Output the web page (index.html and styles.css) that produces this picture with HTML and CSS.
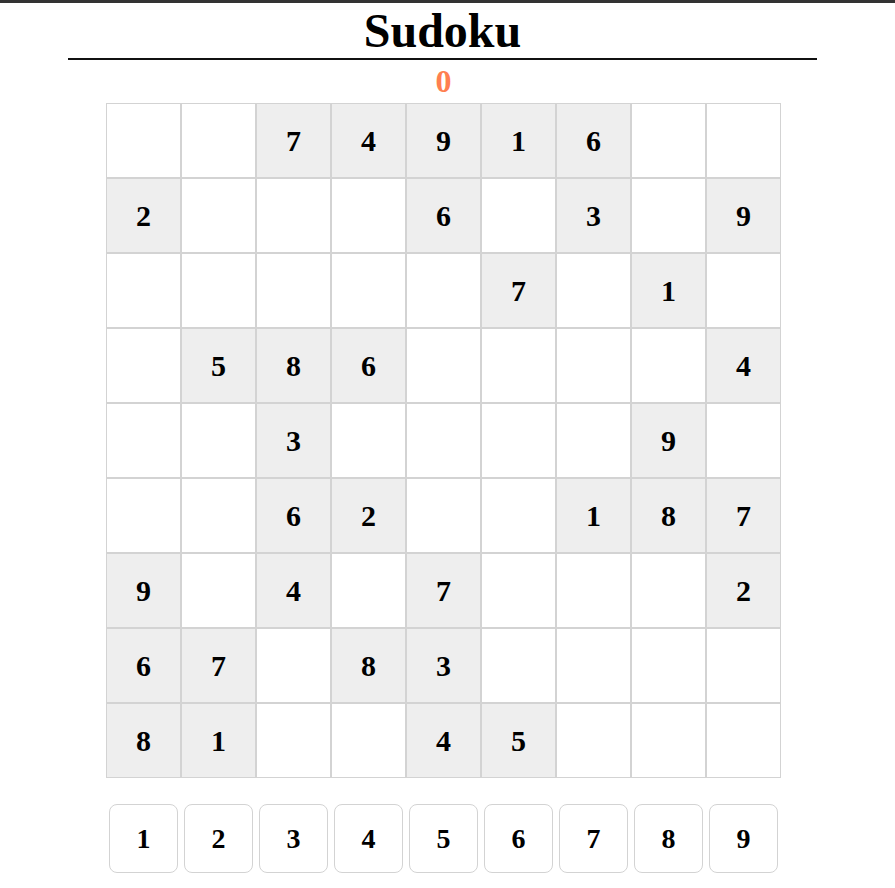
FILE: index.html
```html
<!DOCTYPE html>
<html>
<head>
<meta charset="utf-8">
<title>Sudoku</title>
<link rel="stylesheet" href="styles.css">
</head>
<body>
<div class="topbar"></div>
<div class="page">
  <h1 class="title">Sudoku</h1>
  <div class="score">0</div>
  <div class="board">
    <div class="cell"></div><div class="cell"></div><div class="cell given">7</div><div class="cell given">4</div><div class="cell given">9</div><div class="cell given">1</div><div class="cell given">6</div><div class="cell"></div><div class="cell"></div>
    <div class="cell given">2</div><div class="cell"></div><div class="cell"></div><div class="cell"></div><div class="cell given">6</div><div class="cell"></div><div class="cell given">3</div><div class="cell"></div><div class="cell given">9</div>
    <div class="cell"></div><div class="cell"></div><div class="cell"></div><div class="cell"></div><div class="cell"></div><div class="cell given">7</div><div class="cell"></div><div class="cell given">1</div><div class="cell"></div>
    <div class="cell"></div><div class="cell given">5</div><div class="cell given">8</div><div class="cell given">6</div><div class="cell"></div><div class="cell"></div><div class="cell"></div><div class="cell"></div><div class="cell given">4</div>
    <div class="cell"></div><div class="cell"></div><div class="cell given">3</div><div class="cell"></div><div class="cell"></div><div class="cell"></div><div class="cell"></div><div class="cell given">9</div><div class="cell"></div>
    <div class="cell"></div><div class="cell"></div><div class="cell given">6</div><div class="cell given">2</div><div class="cell"></div><div class="cell"></div><div class="cell given">1</div><div class="cell given">8</div><div class="cell given">7</div>
    <div class="cell given">9</div><div class="cell"></div><div class="cell given">4</div><div class="cell"></div><div class="cell given">7</div><div class="cell"></div><div class="cell"></div><div class="cell"></div><div class="cell given">2</div>
    <div class="cell given">6</div><div class="cell given">7</div><div class="cell"></div><div class="cell given">8</div><div class="cell given">3</div><div class="cell"></div><div class="cell"></div><div class="cell"></div><div class="cell"></div>
    <div class="cell given">8</div><div class="cell given">1</div><div class="cell"></div><div class="cell"></div><div class="cell given">4</div><div class="cell given">5</div><div class="cell"></div><div class="cell"></div><div class="cell"></div>
  </div>
  <div class="pad">
    <button class="key">1</button><button class="key">2</button><button class="key">3</button><button class="key">4</button><button class="key">5</button><button class="key">6</button><button class="key">7</button><button class="key">8</button><button class="key">9</button>
  </div>
</div>
</body>
</html>
```
FILE: styles.css
```css
html, body {
  margin: 0;
  padding: 0;
  background: #fff;
}
body {
  font-family: "Liberation Serif", "Times New Roman", serif;
  color: #000;
}
.topbar {
  height: 3px;
  background: #333;
}
.page {
  width: 887px;
  display: flex;
  flex-direction: column;
  align-items: center;
}
.title {
  align-self: stretch;
  margin: 0 70px 0 68px;
  font-size: 48px;
  font-weight: bold;
  line-height: normal;
  text-align: center;
  border-bottom: 2px solid #111;
}
.score {
  margin-top: 3px;
  font-size: 32px;
  font-weight: bold;
  line-height: normal;
  color: coral;
}
.board {
  margin-top: 3px;
  display: grid;
  grid-template-columns: repeat(9, 75px);
  grid-auto-rows: 75px;
}
.cell {
  box-sizing: border-box;
  border: 1px solid #d3d3d3;
  display: flex;
  align-items: center;
  justify-content: center;
  font-size: 30px;
  font-weight: bold;
}
.given {
  background: #eee;
}
.pad {
  margin-top: 26px;
  display: grid;
  grid-template-columns: repeat(9, 75px);
}
.key {
  box-sizing: border-box;
  margin: 0 3px;
  height: 69px;
  border: 1px solid #d3d3d3;
  border-radius: 8px;
  background: #fff;
  font-family: "Liberation Serif", "Times New Roman", serif;
  font-size: 28px;
  font-weight: bold;
  color: #000;
  padding: 0;
}
```
